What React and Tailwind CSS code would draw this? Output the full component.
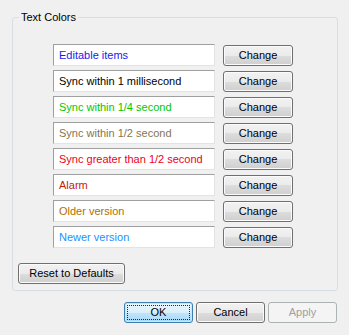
import React from "react";

const rows = [
  { label: "Editable items", color: "text-[#1a1af0]" },
  { label: "Sync within 1 millisecond", color: "text-[#000000]" },
  { label: "Sync within 1/4 second", color: "text-[#00c800]" },
  { label: "Sync within 1/2 second", color: "text-[#857552]" },
  { label: "Sync greater than 1/2 second", color: "text-[#ee0020]" },
  { label: "Alarm", color: "text-[#cc2000]" },
  { label: "Older version", color: "text-[#b07000]" },
  { label: "Newer version", color: "text-[#1e90ff]" },
];

const btn =
  "flex items-center justify-center rounded-[3px] border border-[#707070] bg-[linear-gradient(to_bottom,#f2f2f2_0%,#ebebeb_50%,#dddddd_50%,#cfcfcf_100%)] shadow-[inset_0_0_0_1px_#fbfbfb] text-black";

export default function App() {
  return (
    <div
      className="w-[349px] h-[335px] bg-[#f0f0f0] text-[11px] leading-none"
      style={{ fontFamily: '"Liberation Sans", Arial, sans-serif' }}
    >
      <div className="pt-[17px] pl-[12px]">
        <div className="relative w-[326px] h-[274px] border border-[#d5dfe5] rounded-[3px] flex flex-col">
          <div className="absolute left-[6px] top-[-7px] bg-[#f0f0f0] px-[2px] h-[13px] flex items-center">
            Text Colors
          </div>
          <div className="flex flex-col gap-[4px] pl-[40px] pt-[26px]">
            {rows.map((r) => (
              <div key={r.label} className="flex items-start gap-[8px]">
                <div
                  className={`w-[162px] h-[22px] bg-white border-t border-l border-r border-b border-t-[#a0a0a0] border-l-[#a0a0a0] border-r-[#e3e3e3] border-b-[#e3e3e3] pl-[5px] flex items-center ${r.color}`}
                >
                  {r.label}
                </div>
                <button className={`${btn} mt-[1px] w-[70px] h-[21px]`}>Change</button>
              </div>
            ))}
          </div>
          <div className="pl-[5px] pt-[15px]">
            <button className={`${btn} w-[107px] h-[21px]`}>Reset to Defaults</button>
          </div>
        </div>
      </div>
      <div className="flex gap-[3px] pl-[124px] pt-[11px]">
        <button className="relative w-[69px] h-[21px] rounded-[3px] border border-[#3c7fb1] bg-[linear-gradient(to_bottom,#eaf6fd_0%,#d9f0fc_50%,#bee6fd_50%,#a7d9f5_100%)] shadow-[inset_0_0_0_1px_#c4e8fb] flex items-center justify-center text-black">
          <span className="absolute inset-[2px] border border-dotted border-[#402020]"></span>
          OK
        </button>
        <button className={`${btn} w-[69px] h-[21px]`}>Cancel</button>
        <button className="w-[69px] h-[21px] rounded-[3px] border border-[#adb2b5] bg-[#f4f4f4] flex items-center justify-center text-[#a0a0a0]">
          Apply
        </button>
      </div>
    </div>
  );
}
